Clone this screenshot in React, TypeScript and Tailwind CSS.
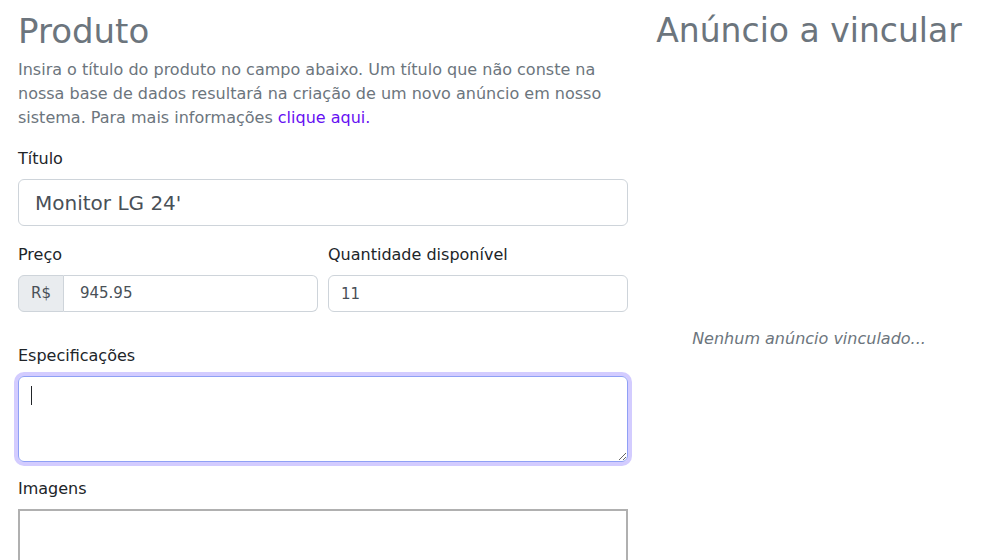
import React from 'react';

const font = { fontFamily: '"DejaVu Sans", "Noto Sans", sans-serif' };

function Label({ children }: { children: React.ReactNode }) {
  return <label className="block text-[16px] leading-6 text-[#212529] mb-[8px]">{children}</label>;
}

export default function App() {
  return (
    <div className="w-[985px] h-[560px] overflow-hidden bg-white flex" style={font}>
      {/* Left: produto form */}
      <div className="w-[610px] ml-[18px] shrink-0">
        <h1 className="text-[34px] leading-[40px] mt-[11px] text-[#6c757d] font-normal">Produto</h1>
        <p className="text-[16px] leading-6 text-[#6c757d] mt-[7px]">
          Insira o título do produto no campo abaixo. Um título que não conste na
          <br />
          nossa base de dados resultará na criação de um novo anúncio em nosso
          <br />
          sistema. Para mais informações <a className="text-[#6610f2]">clique aqui.</a>
        </p>

        <div className="mt-[17px]">
          <Label>Título</Label>
          <input
            readOnly
            value="Monitor LG 24'"
            className="w-full h-[47px] rounded-md border border-[#ced4da] px-4 text-[20px] text-[#495057] outline-none"
            style={font}
          />
        </div>

        <div className="flex gap-[10px] mt-[17px]">
          <div className="flex-1">
            <Label>Preço</Label>
            <div className="flex h-[37px]">
              <span className="flex items-center px-3 bg-[#e9ecef] border border-[#ced4da] rounded-l-md text-[15px] text-[#495057]">
                R$
              </span>
              <input
                readOnly
                value="945.95"
                className="flex-1 min-w-0 border border-l-0 border-[#ced4da] rounded-r-md px-4 text-[15px] text-[#495057] outline-none"
                style={font}
              />
            </div>
          </div>
          <div className="flex-1">
            <Label>Quantidade disponível</Label>
            <input
              readOnly
              value="11"
              className="w-full h-[37px] border border-[#ced4da] rounded-md px-3 text-[15px] text-[#495057] outline-none"
              style={font}
            />
          </div>
        </div>

        <div className="mt-[32px]">
          <Label>Especificações</Label>
          <div className="relative">
            <textarea
              className="block w-full h-[86px] rounded-md border border-[#8fa0f5] ring-4 ring-[#d3ccff] outline-none px-3 py-2"
              style={font}
            />
            <span className="absolute left-[13px] top-[10px] w-px h-[19px] bg-[#212529]" />
          </div>
        </div>

        <div className="mt-[15px]">
          <Label>Imagens</Label>
          <div className="h-[80px] border-2 border-[#b0b0b0]" />
        </div>
      </div>

      {/* Right: anúncio */}
      <div className="w-[338px] ml-[12px] flex flex-col items-center">
        <h2 className="text-[33px] leading-[40px] mt-[11px] text-[#6c757d] font-normal whitespace-nowrap">
          Anúncio a vincular
        </h2>
        <p className="mt-[276px] text-[16px] italic text-[#6c757d]">Nenhum anúncio vinculado...</p>
      </div>
    </div>
  );
}
